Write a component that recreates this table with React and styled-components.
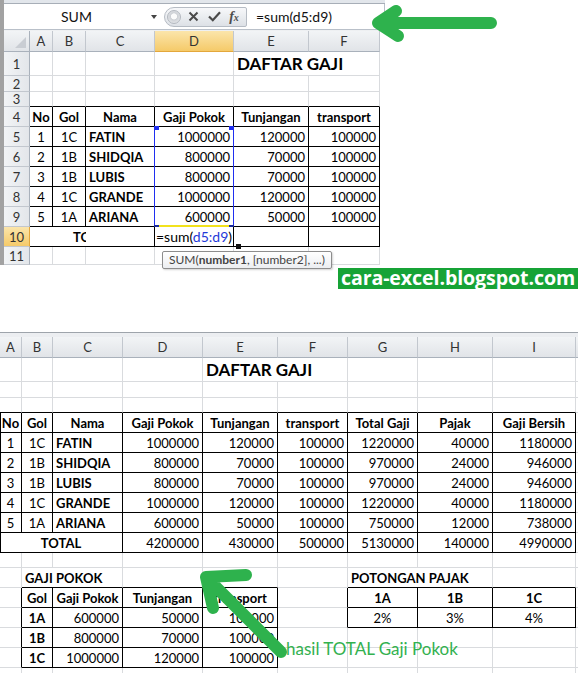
import React from "react";
import styled, { createGlobalStyle } from "styled-components";

const GlobalStyle = createGlobalStyle`
  body {
    margin: 0;
    background: #fff;
    font-family: Lato, "Liberation Sans", sans-serif;
  }
`;

const GRID = "#d9dbde";
const LINE = "#000";

const Page = styled.div`
  position: relative;
  width: 578px;
  height: 673px;
  overflow: hidden;
  background: #fff;
`;

// ---------- top screenshot ----------

const TopShot = styled.div`
  position: relative;
  width: 381px;
  border-left: 4px solid #a2a2a2;
`;

const Ribbon = styled.div`
  height: 3px;
  background: #e2e6eb;
  border-bottom: 1px solid #a7aeb7;
`;

const FormulaBar = styled.div`
  display: flex;
  align-items: center;
  height: 25px;
  background: #fff;
  border-bottom: 1px solid #b9c0c9;
  border-right: 1px solid #b9c0c9;
`;

const NameBox = styled.div`
  display: flex;
  align-items: center;
  width: 158px;
  height: 100%;
  padding-left: 57px;
  box-sizing: border-box;
  font-size: 14px;
  color: #111;
`;

const DropArrow = styled.span`
  margin-left: auto;
  margin-right: 5px;
  width: 0;
  height: 0;
  border-left: 3.5px solid transparent;
  border-right: 3.5px solid transparent;
  border-top: 4px solid #444;
`;

const Pill = styled.div`
  display: flex;
  align-items: center;
  width: 83px;
  height: 20px;
  margin-left: 2px;
  box-sizing: border-box;
  border: 1px solid #b6bcc4;
  border-radius: 10px 2px 2px 10px;
  background: linear-gradient(#f7f8fa, #dde1e6);
`;

const Dot = styled.span`
  width: 12px;
  height: 12px;
  margin-left: 2px;
  border-radius: 50%;
  border: 1px solid #b3b8bf;
  background: radial-gradient(circle at 50% 45%, #fbfbfb 0 30%, #cdd0d5 38%, #e6e8eb 80%);
`;

const IconSlot = styled.span`
  display: flex;
  align-items: center;
  justify-content: center;
  width: ${(p) => p.$w}px;
`;

const Fx = styled.span`
  font-family: "Liberation Serif", serif;
  font-style: italic;
  font-weight: 700;
  font-size: 14px;
  color: #4d4d4d;
  small {
    font-size: 10px;
  }
`;

const FormulaInput = styled.div`
  flex: 1;
  height: 100%;
  display: flex;
  align-items: center;
  padding-left: 9px;
  font-size: 14px;
  color: #111;
`;

const Gap = styled.div`
  height: 1px;
  background: #eef0f2;
`;

const RangeBox = styled.div`
  position: absolute;
  left: 150px;
  top: 126px;
  width: 80px;
  height: 101px;
  box-sizing: border-box;
  border-left: 1px solid #1f2ff0;
  border-right: 1px solid #1f2ff0;
  border-bottom: 2px solid #f2e21c;
`;

const Knob = styled.span`
  position: absolute;
  ${(p) => (p.$side === "l" ? "left: -1px;" : "right: -1px;")}
  ${(p) => (p.$pos === "t" ? "top: 0;" : "bottom: -2px;")}
  width: 5px;
  height: ${(p) => (p.$pos === "t" ? 4 : 2)}px;
  background: ${(p) => (p.$pos === "t" ? "#1f2ff0" : "#1a2a9a")};
`;

const FillHandle = styled.span`
  position: absolute;
  left: 232px;
  top: 244px;
  width: 5px;
  height: 5px;
  background: #111;
`;

const Tip = styled.div`
  position: absolute;
  left: 158px;
  top: 251px;
  height: 16px;
  padding: 0 6px;
  border: 1px solid #8d8d8d;
  border-radius: 2px;
  background: linear-gradient(#ffffff, #eceef1);
  box-shadow: 1px 1px 2px rgba(0, 0, 0, 0.18);
  font-size: 12px;
  line-height: 16px;
  color: #444;
  white-space: nowrap;
`;

const BrandRow = styled.div`
  display: flex;
  justify-content: flex-end;
  margin-top: 3px;
`;

const Brand = styled.div`
  width: 240px;
  height: 21px;
  background: #17a336;
  color: #fff;
  font-family: "Open Sans", "Liberation Sans", sans-serif;
  font-weight: 700;
  font-size: 19.6px;
  letter-spacing: -0.1px;
  line-height: 19px;
  text-align: center;
  white-space: nowrap;
`;

// ---------- bottom screenshot ----------

const BottomShot = styled.div`
  margin-top: 43px;
  width: 578px;
  overflow: hidden;
  border-top: 1px solid #9ea4ab;
`;

const Strip = styled.div`
  height: 4px;
  background: #eceef1;
`;

// ---------- sheet ----------

const Grid = styled.div`
  display: grid;
  grid-template-columns: ${(p) => p.$cols};
  grid-template-rows: ${(p) => p.$rows};
  width: max-content;
  background: #fff;
`;

const HeadBase = styled.div`
  display: flex;
  align-items: center;
  justify-content: center;
  box-sizing: border-box;
  font-size: 13px;
  color: #333;
`;

const ColHead = styled(HeadBase)`
  border-right: 1px solid #c2c7ce;
  border-bottom: 1px solid ${(p) => (p.$hi ? "#e3a73c" : "#a9b1bb")};
  background: ${(p) =>
    p.$hi ? "linear-gradient(#fbe5ab, #f5ca69)" : "linear-gradient(#f2f4f6, #e1e4e8)"};
`;

const RowHead = styled(HeadBase)`
  border-right: 1px solid ${(p) => (p.$hi ? "#e3a73c" : "#a9b1bb")};
  border-bottom: 1px solid #c2c7ce;
  background: ${(p) =>
    p.$hi ? "linear-gradient(#fbe5ab, #f5ca69)" : "linear-gradient(90deg, #f2f4f6, #e3e6ea)"};
`;

const Corner = styled(HeadBase)`
  position: relative;
  border-right: 1px solid #a9b1bb;
  border-bottom: 1px solid #a9b1bb;
  background: linear-gradient(#f2f4f6, #e1e4e8);
  &::after {
    content: "";
    position: absolute;
    right: 3px;
    bottom: 3px;
    border-left: 11px solid transparent;
    border-bottom: 11px solid #c9cdd3;
  }
`;

const Cell = styled.div`
  grid-column: span ${(p) => p.$span};
  display: flex;
  align-items: center;
  justify-content: ${(p) =>
    p.$align === "r" ? "flex-end" : p.$align === "c" ? "center" : "flex-start"};
  padding: 0 3px;
  box-sizing: border-box;
  min-width: 0;
  border-right: 1px solid ${(p) => p.$rc};
  border-bottom: 1px solid ${(p) => p.$bc};
  box-shadow: ${(p) => (p.$lb ? `inset 1px 0 0 ${LINE}` : "none")};
  font-size: ${(p) => p.$size}px;
  font-weight: ${(p) => (p.$bold ? 700 : 400)};
  color: #000;
  white-space: nowrap;
`;

const Clipped = styled.span`
  display: block;
  width: 53px;
  padding-left: 40px;
  box-sizing: border-box;
  overflow: hidden;
  font-weight: 700;
`;

const Edit = styled.span`
  font-size: 14px;
  margin-left: -2px;
`;

const Ref = styled.span`
  color: #1f3ad8;
`;

const Overlay = styled.svg`
  position: absolute;
  left: 0;
  top: 0;
  pointer-events: none;
`;

const Note = styled.div`
  position: absolute;
  left: 286px;
  top: 638px;
  font-size: 17px;
  color: #33b14f;
  white-space: nowrap;
`;

const H = (t) => ({ t, b: true, a: "c" });
const C = (t) => ({ t, a: "c" });
const B = (t) => ({ t, b: true });
const N = (t) => ({ t, a: "r" });
const Title = (t) => ({ t, b: true, span: 2, size: 17 });

function Sheet({ cols, rows, letters, labels, data, boxes, hiCol, hiRow }) {
  const inBox = (r, c) =>
    boxes.some(([r0, r1, c0, c1]) => r >= r0 && r <= r1 && c >= c0 && c <= c1);
  const colTpl = (labels ? [26] : []).concat(cols).map((w) => `${w}px`).join(" ");

  const renderRow = (row, r) =>
    row.map((cell, c) => {
      if (cell === null) return null;
      const spec = typeof cell === "string" ? { t: cell } : cell;
      const span = spec.span || 1;
      const last = c + span - 1;
      let bottom = false;
      for (let k = c; k <= last; k++) if (inBox(r, k) || inBox(r + 1, k)) bottom = true;
      const right = inBox(r, last) || inBox(r, last + 1);
      return (
        <Cell
          key={c}
          $span={span}
          $align={spec.a}
          $bold={spec.b}
          $size={spec.size || 13}
          $rc={right ? LINE : GRID}
          $bc={bottom ? LINE : GRID}
          $lb={!labels && c === 0 && inBox(r, 0)}
        >
          {spec.node || spec.t}
        </Cell>
      );
    });

  return (
    <Grid $cols={colTpl} $rows={rows}>
      {labels && <Corner />}
      {letters.map((l, i) => (
        <ColHead key={i} $hi={i === hiCol}>
          {l}
        </ColHead>
      ))}
      {data.map((row, r) => (
        <React.Fragment key={r}>
          {labels && <RowHead $hi={r === hiRow}>{labels[r]}</RowHead>}
          {renderRow(row, r)}
        </React.Fragment>
      ))}
    </Grid>
  );
}

const E6 = ["", "", "", "", "", ""];
const topData = [
  ["", "", "", "", Title("DAFTAR GAJI"), null],
  E6,
  E6,
  [H("No"), H("Gol"), H("Nama"), H("Gaji Pokok"), H("Tunjangan"), H("transport")],
  [C("1"), C("1C"), B("FATIN"), N("1000000"), N("120000"), N("100000")],
  [C("2"), C("1B"), B("SHIDQIA"), N("800000"), N("70000"), N("100000")],
  [C("3"), C("1B"), B("LUBIS"), N("800000"), N("70000"), N("100000")],
  [C("4"), C("1C"), B("GRANDE"), N("1000000"), N("120000"), N("100000")],
  [C("5"), C("1A"), B("ARIANA"), N("600000"), N("50000"), N("100000")],
  [
    { node: <Clipped>TOTAL</Clipped>, span: 3 },
    null,
    null,
    {
      node: (
        <Edit>
          =sum(<Ref>d5:d9</Ref>)
        </Edit>
      ),
    },
    "",
    "",
  ],
  E6,
];

const E10 = Array(10).fill("");
const bottomData = [
  ["", "", "", "", Title("DAFTAR GAJI"), null, "", "", "", ""],
  E10,
  E10,
  [H("No"), H("Gol"), H("Nama"), H("Gaji Pokok"), H("Tunjangan"), H("transport"), H("Total Gaji"), H("Pajak"), H("Gaji Bersih"), ""],
  [C("1"), C("1C"), B("FATIN"), N("1000000"), N("120000"), N("100000"), N("1220000"), N("40000"), N("1180000"), ""],
  [C("2"), C("1B"), B("SHIDQIA"), N("800000"), N("70000"), N("100000"), N("970000"), N("24000"), N("946000"), ""],
  [C("3"), C("1B"), B("LUBIS"), N("800000"), N("70000"), N("100000"), N("970000"), N("24000"), N("946000"), ""],
  [C("4"), C("1C"), B("GRANDE"), N("1000000"), N("120000"), N("100000"), N("1220000"), N("40000"), N("1180000"), ""],
  [C("5"), C("1A"), B("ARIANA"), N("600000"), N("50000"), N("100000"), N("750000"), N("12000"), N("738000"), ""],
  [{ t: "TOTAL", b: true, a: "c", span: 3 }, null, null, N("4200000"), N("430000"), N("500000"), N("5130000"), N("140000"), N("4990000"), ""],
  E10,
  ["", { t: "GAJI POKOK", b: true, span: 2 }, null, "", "", "", { t: "POTONGAN PAJAK", b: true, span: 2 }, null, "", ""],
  ["", H("Gol"), H("Gaji Pokok"), H("Tunjangan"), H("transport"), "", H("1A"), H("1B"), H("1C"), ""],
  ["", H("1A"), N("600000"), N("50000"), N("100000"), "", C("2%"), C("3%"), C("4%"), ""],
  ["", H("1B"), N("800000"), N("70000"), N("100000"), "", "", "", "", ""],
  ["", H("1C"), N("1000000"), N("120000"), N("100000"), "", "", "", "", ""],
  E10,
];

export default function App() {
  return (
    <Page>
      <GlobalStyle />
      <TopShot>
        <Ribbon />
        <FormulaBar>
          <NameBox>
            SUM
            <DropArrow />
          </NameBox>
          <Pill>
            <Dot />
            <IconSlot $w={24}>
              <svg width="11" height="11" viewBox="0 0 11 11">
                <path d="M1.5 1.5L9.5 9.5M9.5 1.5L1.5 9.5" stroke="#4a4a4a" strokeWidth="2" />
              </svg>
            </IconSlot>
            <IconSlot $w={18}>
              <svg width="13" height="11" viewBox="0 0 13 11">
                <path d="M1 5.5L4.8 9.2L12 1.2" stroke="#4a4a4a" strokeWidth="2.2" fill="none" />
              </svg>
            </IconSlot>
            <IconSlot $w={22}>
              <Fx>
                f<small>x</small>
              </Fx>
            </IconSlot>
          </Pill>
          <FormulaInput>=sum(d5:d9)</FormulaInput>
        </FormulaBar>
        <Gap />
        <Sheet
          cols={[23, 33, 69, 79, 75, 71]}
          rows="21px 24px 16px 15px repeat(7, 20px) 18px"
          letters={["A", "B", "C", "D", "E", "F"]}
          labels={["1", "2", "3", "4", "5", "6", "7", "8", "9", "10", "11"]}
          data={topData}
          boxes={[[3, 9, 0, 5]]}
          hiCol={3}
          hiRow={9}
        />
        <RangeBox>
          <Knob $side="l" $pos="t" />
          <Knob $side="r" $pos="t" />
          <Knob $side="l" $pos="b" />
          <Knob $side="r" $pos="b" />
        </RangeBox>
        <FillHandle />
        <Tip>
          SUM(<b>number1</b>, [number2], ...)
        </Tip>
      </TopShot>

      <BrandRow>
        <Brand>cara-excel.blogspot.com</Brand>
      </BrandRow>

      <BottomShot>
        <Strip />
        <Sheet
          cols={[22, 31, 70, 80, 75, 70, 70, 75, 83, 10]}
          rows="21px 24px 16px 15px repeat(7, 20px) 15px repeat(5, 20px) 20px"
          letters={["A", "B", "C", "D", "E", "F", "G", "H", "I", ""]}
          data={bottomData}
          boxes={[
            [3, 9, 0, 8],
            [12, 15, 1, 4],
            [12, 13, 6, 8],
          ]}
        />
      </BottomShot>

      <Overlay width="578" height="673" viewBox="0 0 578 673">
        <g stroke="#2eb24d" strokeWidth="12" strokeLinecap="round" strokeLinejoin="round" fill="none">
          <path d="M491 23 L378 23 M396 11 L378 23 L398 36" />
          <path d="M281 652 L206 577 M246 575 L206 577 L213 608" />
        </g>
      </Overlay>
      <Note>hasil TOTAL Gaji Pokok</Note>
    </Page>
  );
}
